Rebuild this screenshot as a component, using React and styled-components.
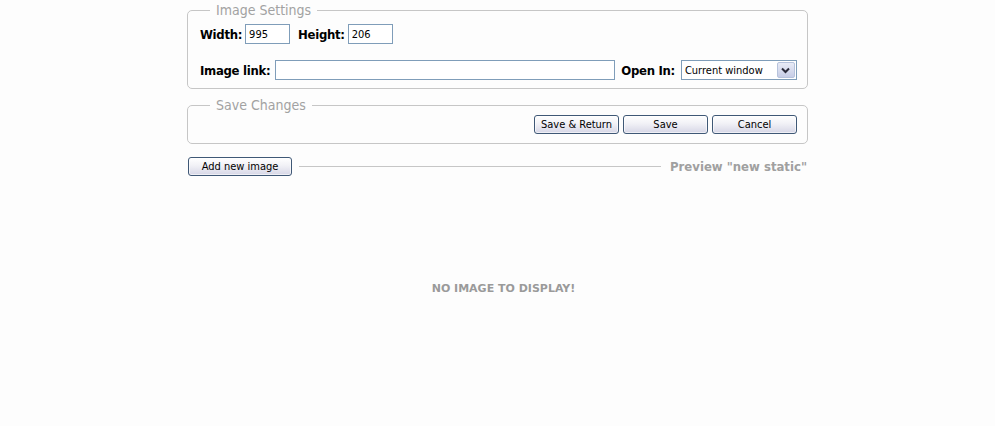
import styled, { createGlobalStyle } from "styled-components";

const GlobalStyle = createGlobalStyle`
  html, body {
    margin: 0;
    padding: 0;
    background: #fdfdfd;
  }
  body {
    font-family: "DejaVu Sans Condensed", "DejaVu Sans", Tahoma, sans-serif;
    color: #000;
  }
`;

export default function App() {
  return (
    <>
      <GlobalStyle />
      <Page>
        <Panel>
          <Legend>Image Settings</Legend>
          <Row>
            <Label>Width:</Label>
            <TextInput width={45} defaultValue="995" />
            <Label gap={8}>Height:</Label>
            <TextInput width={45} defaultValue="206" />
          </Row>
          <Row spaced>
            <Label trail={5}>Image link:</Label>
            <TextInput width={340} defaultValue="" />
            <Label gap={6} trail={6}>Open In:</Label>
            <SelectBox>
              <Select defaultValue="current">
                <option value="current">Current window</option>
                <option value="new">New window</option>
              </Select>
              <ArrowButton>
                <svg width="9" height="7" viewBox="0 0 9 7">
                  <path
                    d="M1 1.5 L4.5 5 L8 1.5"
                    fill="none"
                    stroke="#2b2b3a"
                    strokeWidth="2"
                  />
                </svg>
              </ArrowButton>
            </SelectBox>
          </Row>
        </Panel>

        <Panel tight>
          <Legend>Save Changes</Legend>
          <Actions>
            <Button>Save &amp; Return</Button>
            <Button>Save</Button>
            <Button>Cancel</Button>
          </Actions>
        </Panel>

        <PreviewBar>
          <Button wide>Add new image</Button>
          <Rule />
          <PreviewTitle>Preview "new static"</PreviewTitle>
        </PreviewBar>
      </Page>

      <PreviewArea>
        <EmptyNote>NO IMAGE TO DISPLAY!</EmptyNote>
      </PreviewArea>
    </>
  );
}

const Page = styled.div`
  width: 621px;
  margin: 0 auto;
  padding-top: 1px;
`;

const Panel = styled.fieldset`
  margin: ${(p) => (p.tight ? "7px 0 0" : "0")};
  padding: ${(p) => (p.tight ? "1px 10px 9px 12px" : "5px 10px 8px 12px")};
  border: 1px solid #c6c6c6;
  border-radius: 5px;
  min-width: 0;
`;

const Legend = styled.legend`
  margin-left: 10px;
  padding: 0 6px;
  font-size: 14px;
  line-height: 18px;
  color: #a2a2a2;
`;

const Row = styled.div`
  display: flex;
  align-items: center;
  height: 20px;
  margin-top: ${(p) => (p.spaced ? "16px" : "0")};
`;

const Label = styled.label`
  font-size: 13px;
  font-weight: bold;
  letter-spacing: -0.3px;
  margin-left: ${(p) => (p.gap ? `${p.gap}px` : "0")};
  margin-right: ${(p) => (p.trail ? `${p.trail}px` : "3px")};
  white-space: nowrap;
`;

const TextInput = styled.input`
  box-sizing: border-box;
  width: ${(p) => p.width}px;
  height: 20px;
  border: 1px solid #7f9db9;
  background: #fff;
  padding: 1px 3px 0;
  font-family: "DejaVu Sans Condensed", "DejaVu Sans", Tahoma, sans-serif;
  font-size: 11px;
  color: #000;
  outline: none;
`;

const SelectBox = styled.div`
  box-sizing: border-box;
  display: flex;
  align-items: stretch;
  width: 116px;
  height: 20px;
  border: 1px solid #7f9db9;
  background: #fff;
`;

const Select = styled.select`
  flex: 1;
  min-width: 0;
  appearance: none;
  border: none;
  background: transparent;
  padding: 0 3px;
  font-family: "DejaVu Sans Condensed", "DejaVu Sans", Tahoma, sans-serif;
  font-size: 11px;
  color: #000;
  outline: none;
`;

const ArrowButton = styled.span`
  display: flex;
  align-items: center;
  justify-content: center;
  width: 16px;
  margin: 1px;
  border: 1px solid #b7c3dc;
  border-radius: 2px;
  background: linear-gradient(#e8ebf6, #c7cde6);
`;

const Actions = styled.div`
  display: flex;
  justify-content: flex-end;
  gap: 4px;
`;

const Button = styled.button`
  box-sizing: border-box;
  width: ${(p) => (p.wide ? "104px" : "85px")};
  height: 19px;
  padding: 0;
  border: 1px solid #3f5876;
  border-radius: 3px;
  background: linear-gradient(#ffffff 0%, #f1f1f6 45%, #d6d6e6 100%);
  box-shadow: inset 0 0 0 1px rgba(255, 255, 255, 0.6);
  font-family: "DejaVu Sans Condensed", "DejaVu Sans", Tahoma, sans-serif;
  font-size: 11px;
  color: #000;
  cursor: pointer;
`;

const PreviewBar = styled.div`
  display: flex;
  align-items: center;
  margin-top: 13px;
  padding-left: 1px;
`;

const Rule = styled.div`
  flex: 1;
  height: 1px;
  background: #c6c6c6;
  margin: 0 9px 0 7px;
`;

const PreviewTitle = styled.div`
  font-size: 13px;
  font-weight: bold;
  color: #a0a0a0;
  white-space: nowrap;
  margin-right: 1px;
`;

const PreviewArea = styled.div`
  display: flex;
  align-items: center;
  justify-content: center;
  height: 206px;
  margin-top: 9px;
  padding-left: 12px;
`;

const EmptyNote = styled.div`
  font-family: "DejaVu Sans", Verdana, sans-serif;
  font-size: 11px;
  font-weight: bold;
  color: #9a9a9a;
`;
